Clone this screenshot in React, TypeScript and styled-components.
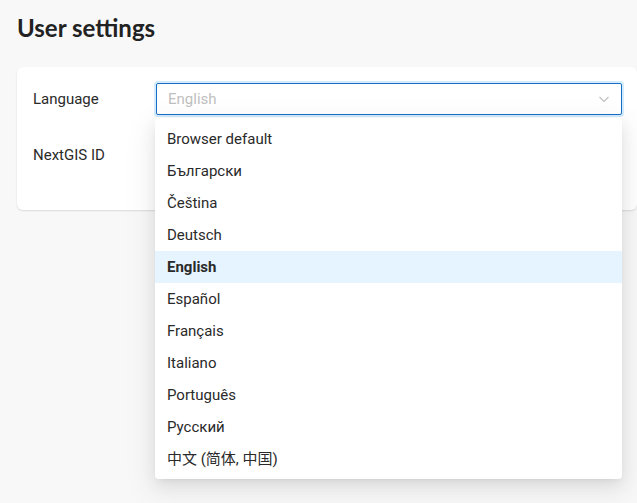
import { useState } from 'react'
import styled, { createGlobalStyle } from 'styled-components'

/* ---------------- UI ---------------- */

const Global = createGlobalStyle`
  html, body { margin: 0; padding: 0; background: #f8f8f8; }
  body { font-family: Roboto, "Noto Sans CJK SC", sans-serif; color: rgba(0,0,0,.88); }
  * { box-sizing: border-box; }
`
const Page = styled.main`
  padding: 12px 0 24px 17px;
  min-height: 503px;
`
const Title = styled.h1`
  margin: 0 0 23px 0;
  font-family: Lato, "Open Sans", sans-serif;
  font-size: 24px; line-height: 32px; font-weight: 700;
  color: #222;
`
const Card = styled.section`
  display: grid; gap: 24px;
  background: #fff;
  border-radius: 6px;
  padding: 16px 16px 39px;
  box-shadow: 0 1px 2px rgba(0,0,0,.12);
`
const Row = styled.div`
  display: grid;
  grid-template-columns: 123px 466px;
  align-items: center;
  min-height: 32px;
`
const Label = styled.label`
  font-size: 15px; color: #2a2a2a;
`
const SelectWrap = styled.div`
  position: relative;
`
const SelectBox = styled.div<{ open?: boolean }>`
  height: 32px;
  display: flex; align-items: center; justify-content: space-between;
  padding: 0 11px;
  border: 1px solid ${({ open }) => open ? '#1a6fc4' : '#d9d9d9'};
  border-radius: 2px;
  box-shadow: ${({ open }) => open ? '0 0 0 2px rgba(5,145,255,.18)' : 'none'};
  background: #fff;
  cursor: pointer;
`
const Placeholder = styled.span`
  font-size: 15px; color: #bfbfbf;
`
const Dropdown = styled.ul`
  position: absolute; left: -1px; right: 0; top: 35px;
  margin: 0; padding: 5px 0 4px;
  list-style: none;
  background: #fff;
  border-radius: 4px;
  box-shadow: 0 6px 16px 0 rgba(0,0,0,.08), 0 3px 6px -4px rgba(0,0,0,.12), 0 9px 28px 8px rgba(0,0,0,.05);
  z-index: 10;
`
const Option = styled.li<{ selected?: boolean }>`
  height: 32px; line-height: 33px;
  padding: 0 12px;
  font-size: 15px;
  color: #2a2a2a;
  font-weight: ${({ selected }) => selected ? 700 : 400};
  background: ${({ selected }) => selected ? '#e6f4ff' : 'transparent'};
  cursor: pointer;
`

const languages = [
  'Browser default', 'Български', 'Čeština', 'Deutsch', 'English', 'Español',
  'Français', 'Italiano', 'Português', 'Русский', '中文 (简体, 中国)',
]

function Chevron() {
  return (
    <svg width="12" height="12" viewBox="0 0 12 12" fill="none">
      <path d="M1.5 4 L6 8.5 L10.5 4" stroke="#bfbfbf" strokeWidth="1.1" />
    </svg>
  )
}

/* ----------- page component ---------- */

export default function App() {
  const [lang, setLang] = useState('English')
  const [open, setOpen] = useState(true)

  return (
    <Page>
      <Global />
      <Title>User settings</Title>
      <Card>
        <Row>
          <Label>Language</Label>
          <SelectWrap>
            <SelectBox open={open} onClick={() => setOpen(o => !o)}>
              <Placeholder>{lang}</Placeholder>
              <Chevron />
            </SelectBox>
            {open && (
              <Dropdown>
                {languages.map(l => (
                  <Option key={l} selected={l === lang} onClick={() => { setLang(l); setOpen(false) }}>
                    {l}
                  </Option>
                ))}
              </Dropdown>
            )}
          </SelectWrap>
        </Row>
        <Row>
          <Label>NextGIS ID</Label>
          <div />
        </Row>
      </Card>
    </Page>
  )
}
